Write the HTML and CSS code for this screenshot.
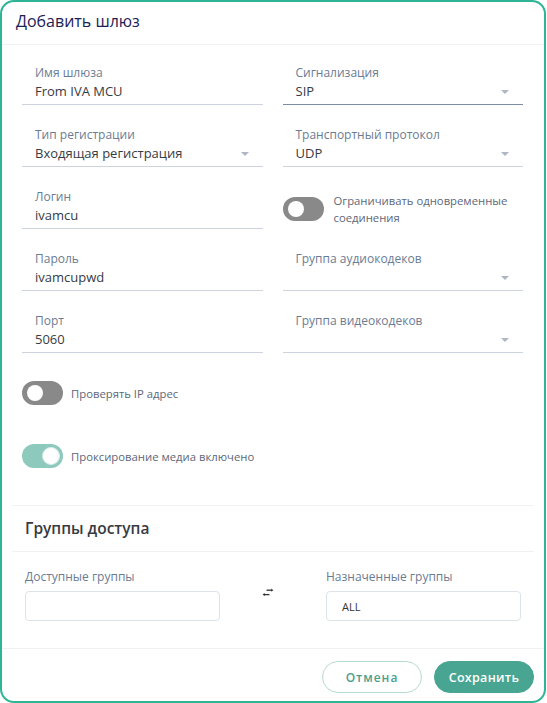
FILE: index.html
```html
<!DOCTYPE html>
<html lang="ru">
<head>
<meta charset="utf-8">
<title>Добавить шлюз</title>
<link rel="stylesheet" href="styles.css">
</head>
<body>
<div class="modal">
  <div class="modal-header">
    <h2 class="modal-title">Добавить шлюз</h2>
  </div>
  <div class="form-body">
    <div class="columns">
      <div class="col">
        <div class="field">
          <div class="field-label">Имя шлюза</div>
          <div class="field-value">From IVA MCU</div>
        </div>
        <div class="field select">
          <div class="field-label">Тип регистрации</div>
          <div class="field-value">Входящая регистрация</div>
          <span class="caret"></span>
        </div>
        <div class="field">
          <div class="field-label">Логин</div>
          <div class="field-value">ivamcu</div>
        </div>
        <div class="field">
          <div class="field-label">Пароль</div>
          <div class="field-value">ivamcupwd</div>
        </div>
        <div class="field">
          <div class="field-label">Порт</div>
          <div class="field-value">5060</div>
        </div>
      </div>
      <div class="col">
        <div class="field select focused">
          <div class="field-label">Сигнализация</div>
          <div class="field-value">SIP</div>
          <span class="caret"></span>
        </div>
        <div class="field select">
          <div class="field-label">Транспортный протокол</div>
          <div class="field-value">UDP</div>
          <span class="caret"></span>
        </div>
        <div class="toggle-cell">
          <span class="toggle"><span class="knob"></span></span>
          <span class="toggle-text">Ограничивать одновременные<br>соединения</span>
        </div>
        <div class="field select">
          <div class="field-label">Группа аудиокодеков</div>
          <div class="field-value"></div>
          <span class="caret"></span>
        </div>
        <div class="field select">
          <div class="field-label">Группа видеокодеков</div>
          <div class="field-value"></div>
          <span class="caret"></span>
        </div>
      </div>
    </div>
    <div class="toggle-row first">
      <span class="toggle"><span class="knob"></span></span>
      <span class="toggle-text">Проверять IP адрес</span>
    </div>
    <div class="toggle-row">
      <span class="toggle on"><span class="knob"></span></span>
      <span class="toggle-text">Проксирование медиа включено</span>
    </div>
  </div>
  <div class="divider"></div>
  <div class="section-title">Группы доступа</div>
  <div class="divider"></div>
  <div class="groups">
    <div class="group">
      <div class="group-label">Доступные группы</div>
      <div class="group-box"></div>
    </div>
    <div class="swap">
      <svg width="12" height="9" viewBox="0 0 12 9" aria-hidden="true">
        <path d="M4.5 2.2H10" stroke="#333" stroke-width="1.3" fill="none"/>
        <path d="M9.3 0.6L11.3 2.2L9.3 3.8Z" fill="#333"/>
        <path d="M7.5 6.6H2" stroke="#333" stroke-width="1.3" fill="none"/>
        <path d="M2.7 5L0.7 6.6L2.7 8.2Z" fill="#333"/>
      </svg>
    </div>
    <div class="group">
      <div class="group-label">Назначенные группы</div>
      <div class="group-box"><span class="chip">ALL</span></div>
    </div>
  </div>
  <div class="footer">
    <button class="btn btn-outline">Отмена</button>
    <button class="btn btn-primary">Сохранить</button>
  </div>
</div>
</body>
</html>
```

FILE: styles.css
```css
* {
  box-sizing: border-box;
}

html, body {
  margin: 0;
  padding: 0;
  background: #ffffff;
}

body {
  font-family: "Open Sans", "Noto Sans", sans-serif;
  color: #333b44;
}

.modal {
  width: 546px;
  height: 703px;
  border: 2px solid #2db596;
  border-radius: 14px;
  display: flex;
  flex-direction: column;
  background: #fff;
  overflow: hidden;
}

.modal-header {
  padding: 9px 14px 13px;
  border-bottom: 1px solid #f0f1f3;
}

.modal-title {
  margin: 0;
  font-size: 16px;
  line-height: 20px;
  font-weight: 500;
  color: #1c2256;
}

.form-body {
  padding: 20px 21px 37px 20px;
}

.columns {
  display: grid;
  grid-template-columns: 1fr 1fr;
  column-gap: 20px;
}

.col {
  display: flex;
  flex-direction: column;
  gap: 22px;
}

.field {
  position: relative;
  height: 40px;
  border-bottom: 1px solid #cdd4dd;
}

.field.focused {
  border-bottom-color: #7d8ca2;
}

.field-label {
  font-size: 12px;
  line-height: 16px;
  color: #6a7c93;
  padding-left: 13px;
}

.field-value {
  font-size: 13px;
  line-height: 20px;
  height: 20px;
  color: #363c44;
  padding-left: 13px;
}

.caret {
  position: absolute;
  right: 14px;
  top: 25px;
  width: 0;
  height: 0;
  border-left: 4px solid transparent;
  border-right: 4px solid transparent;
  border-top: 4px solid #aeb7c3;
}

.toggle-cell {
  height: 40px;
  display: flex;
  align-items: center;
  gap: 10px;
}

.toggle {
  position: relative;
  flex: none;
  width: 41px;
  height: 24px;
  border-radius: 12px;
  background: #898989;
}

.toggle .knob {
  position: absolute;
  left: 5px;
  top: 4px;
  width: 16px;
  height: 16px;
  border-radius: 50%;
  background: #ffffff;
}

.toggle.on {
  background: #8dc9bc;
}

.toggle.on .knob {
  left: auto;
  right: 3px;
  top: 3px;
  width: 18px;
  height: 18px;
  border: 1px solid #d7ede8;
}

.toggle-text {
  font-size: 11.3px;
  line-height: 17px;
  color: #5d6779;
}

.toggle-row {
  display: flex;
  align-items: center;
  gap: 8px;
  height: 24px;
  margin-top: 39px;
}

.toggle-row.first {
  margin-top: 28px;
}

.divider {
  height: 1px;
  background: #f0f1f3;
  margin: 0 10px;
}

.section-title {
  padding: 12px 23px 13px;
  font-size: 15.5px;
  line-height: 20px;
  font-weight: 600;
  color: #373b40;
}

.groups {
  display: grid;
  grid-template-columns: 195px 106px 195px;
  padding: 17px 0 27px 23px;
}

.group-label {
  font-size: 12px;
  line-height: 16px;
  color: #6a7c93;
  margin-bottom: 6px;
}

.group-box {
  height: 30px;
  border: 1px solid #dde3ea;
  border-radius: 4px;
  display: flex;
  align-items: center;
  padding-left: 15px;
}

.chip {
  font-size: 11px;
  color: #333;
}

.swap {
  padding-top: 19px;
  padding-left: 42px;
}

.swap svg {
  display: block;
}

.footer {
  flex: 1;
  border-top: 1px solid #f0f1f3;
  display: flex;
  justify-content: flex-end;
  align-items: flex-start;
  gap: 12px;
  padding: 12px 10px 0 0;
}

.btn {
  width: 100px;
  height: 32px;
  border-radius: 16px;
  font-family: "Open Sans", "Noto Sans", sans-serif;
  font-weight: 600;
  cursor: pointer;
  padding: 0;
}

.btn-outline {
  background: #ffffff;
  border: 1px solid #b7dad3;
  color: #4c9f8e;
  font-size: 12px;
  letter-spacing: 1px;
}

.btn-primary {
  background: #47a591;
  border: 1px solid #47a591;
  color: #ffffff;
  font-size: 12.5px;
  letter-spacing: 0.3px;
}
```
